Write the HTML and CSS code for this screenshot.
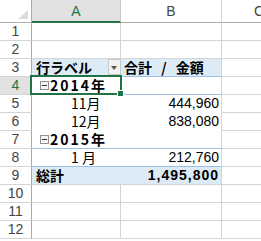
FILE: index.html
```html
<!DOCTYPE html>
<html lang="ja">
<head>
    <meta charset="UTF-8">
    <meta name="viewport" content="width=device-width, initial-scale=1.0">
    <title>ピボットテーブル</title>
    <link rel="stylesheet" href="styles.css">
</head>
<body>
    <div class="sheet">
        <div class="cell corner"><span class="tri"></span></div>
        <div class="cell col-hd active">A</div>
        <div class="cell col-hd">B</div>
        <div class="cell col-hd col-c">C</div>

        <div class="cell row-hd">1</div><div class="cell"></div><div class="cell"></div><div class="cell"></div>
        <div class="cell row-hd">2</div><div class="cell"></div><div class="cell"></div><div class="cell"></div>

        <div class="cell row-hd">3</div>
        <div class="cell pv-a head blue line">
            <span class="bold">行ラベル</span>
            <span class="dropdown"></span>
        </div>
        <div class="cell pv-b head blue line"><span class="bold spaced">合計 / 金額</span></div>
        <div class="cell"></div>

        <div class="cell row-hd active">4</div>
        <div class="cell pv-a line"><span class="toggle"></span><span class="bold year">2014年</span></div>
        <div class="cell pv-b line"></div>
        <div class="cell"></div>

        <div class="cell row-hd">5</div>
        <div class="cell pv-a plain month">11月</div>
        <div class="cell pv-b plain num">444,960</div>
        <div class="cell"></div>

        <div class="cell row-hd">6</div>
        <div class="cell pv-a plain month">12月</div>
        <div class="cell pv-b plain num">838,080</div>
        <div class="cell"></div>

        <div class="cell row-hd">7</div>
        <div class="cell pv-a line"><span class="toggle"></span><span class="bold year">2015年</span></div>
        <div class="cell pv-b line"></div>
        <div class="cell"></div>

        <div class="cell row-hd">8</div>
        <div class="cell pv-a line month">1&nbsp;月</div>
        <div class="cell pv-b line num">212,760</div>
        <div class="cell"></div>

        <div class="cell row-hd">9</div>
        <div class="cell pv-a blue"><span class="bold">総計</span></div>
        <div class="cell pv-b blue num bold total">1,495,800</div>
        <div class="cell"></div>

        <div class="cell row-hd">10</div><div class="cell"></div><div class="cell"></div><div class="cell"></div>
        <div class="cell row-hd">11</div><div class="cell"></div><div class="cell"></div><div class="cell"></div>
        <div class="cell row-hd">12</div><div class="cell"></div><div class="cell"></div><div class="cell"></div>

        <div class="selection"><span class="handle"></span></div>
    </div>
</body>
</html>
```

FILE: styles.css
```css
body {
    margin: 0;
    background: #fff;
    font-family: "Liberation Sans", "Noto Sans CJK JP", sans-serif;
    font-size: 14px;
    color: #000;
}
.sheet {
    position: relative;
    display: grid;
    grid-template-columns: 32px 89px 101px 1fr;
    grid-template-rows: 23px;
    grid-auto-rows: 18px;
    width: 261px;
    height: 241px;
    overflow: hidden;
}
.cell {
    box-sizing: border-box;
    border-right: 1px solid #d4d4d4;
    border-bottom: 1px solid #d4d4d4;
    line-height: 17px;
    white-space: nowrap;
}
.corner {
    position: relative;
    border-right-color: #ababab;
    border-bottom-color: #ababab;
}
.tri {
    position: absolute;
    right: 3px;
    bottom: 3px;
    width: 0;
    height: 0;
    border-left: 10px solid transparent;
    border-bottom: 9px solid #dcdcdc;
}
.col-hd {
    border-bottom-color: #ababab;
    text-align: center;
    line-height: 22px;
    color: #444;
    font-size: 14px;
}
.col-hd.active {
    background: #e1e1e1;
    color: #217346;
    border-bottom: 2px solid #217346;
    border-right-color: #c6c6c6;
}
.col-c {
    text-align: left;
    padding-left: 32px;
}
.row-hd {
    border-right-color: #ababab;
    text-align: center;
    color: #444;
}
.row-hd.active {
    background: #e1e1e1;
    color: #217346;
}
.pv-a {
    border-right: none;
    display: flex;
    align-items: center;
    font-family: "Noto Sans CJK JP", sans-serif;
}
.pv-b {
    font-family: "Noto Sans CJK JP", sans-serif;
}
.blue {
    background: #ddebf7;
}
.line {
    border-bottom-color: #9bc2e6;
}
.plain {
    border-bottom-color: #fff;
}
.bold {
    font-weight: bold;
}
.spaced {
    word-spacing: 6px;
}
.head {
    padding-left: 4px;
}
.pv-b.head {
    padding-left: 3px;
}
.pv-a.head {
    justify-content: space-between;
}
.dropdown {
    position: relative;
    box-sizing: border-box;
    width: 13px;
    height: 16px;
    margin-top: -1px;
    background: #f3f3f3;
    border: 1px solid #c8c8c8;
}
.dropdown::after {
    content: "";
    position: absolute;
    left: 2px;
    top: 6px;
    border-left: 3.5px solid transparent;
    border-right: 3.5px solid transparent;
    border-top: 4px solid #555;
}
.toggle {
    position: relative;
    box-sizing: border-box;
    width: 9px;
    height: 9px;
    margin-left: 8px;
    margin-right: 1px;
    border: 1px solid #919191;
    background: #f4f4f4;
}
.toggle::after {
    content: "";
    position: absolute;
    left: 1px;
    top: 3px;
    width: 5px;
    height: 1px;
    background: #333;
}
.year {
    letter-spacing: 2px;
}
.month {
    padding-left: 39px;
}
.num {
    text-align: right;
    padding-right: 2px;
    font-family: "Liberation Sans", sans-serif;
}
.pv-a.blue {
    padding-left: 4px;
}
.total {
    letter-spacing: 1px;
}
.selection {
    position: absolute;
    left: 30px;
    top: 75px;
    width: 92px;
    height: 20px;
    box-sizing: border-box;
    border: 2px solid #217346;
}
.handle {
    position: absolute;
    right: -4px;
    bottom: -4px;
    width: 5px;
    height: 5px;
    background: #217346;
    border: 1px solid #fff;
}
```
